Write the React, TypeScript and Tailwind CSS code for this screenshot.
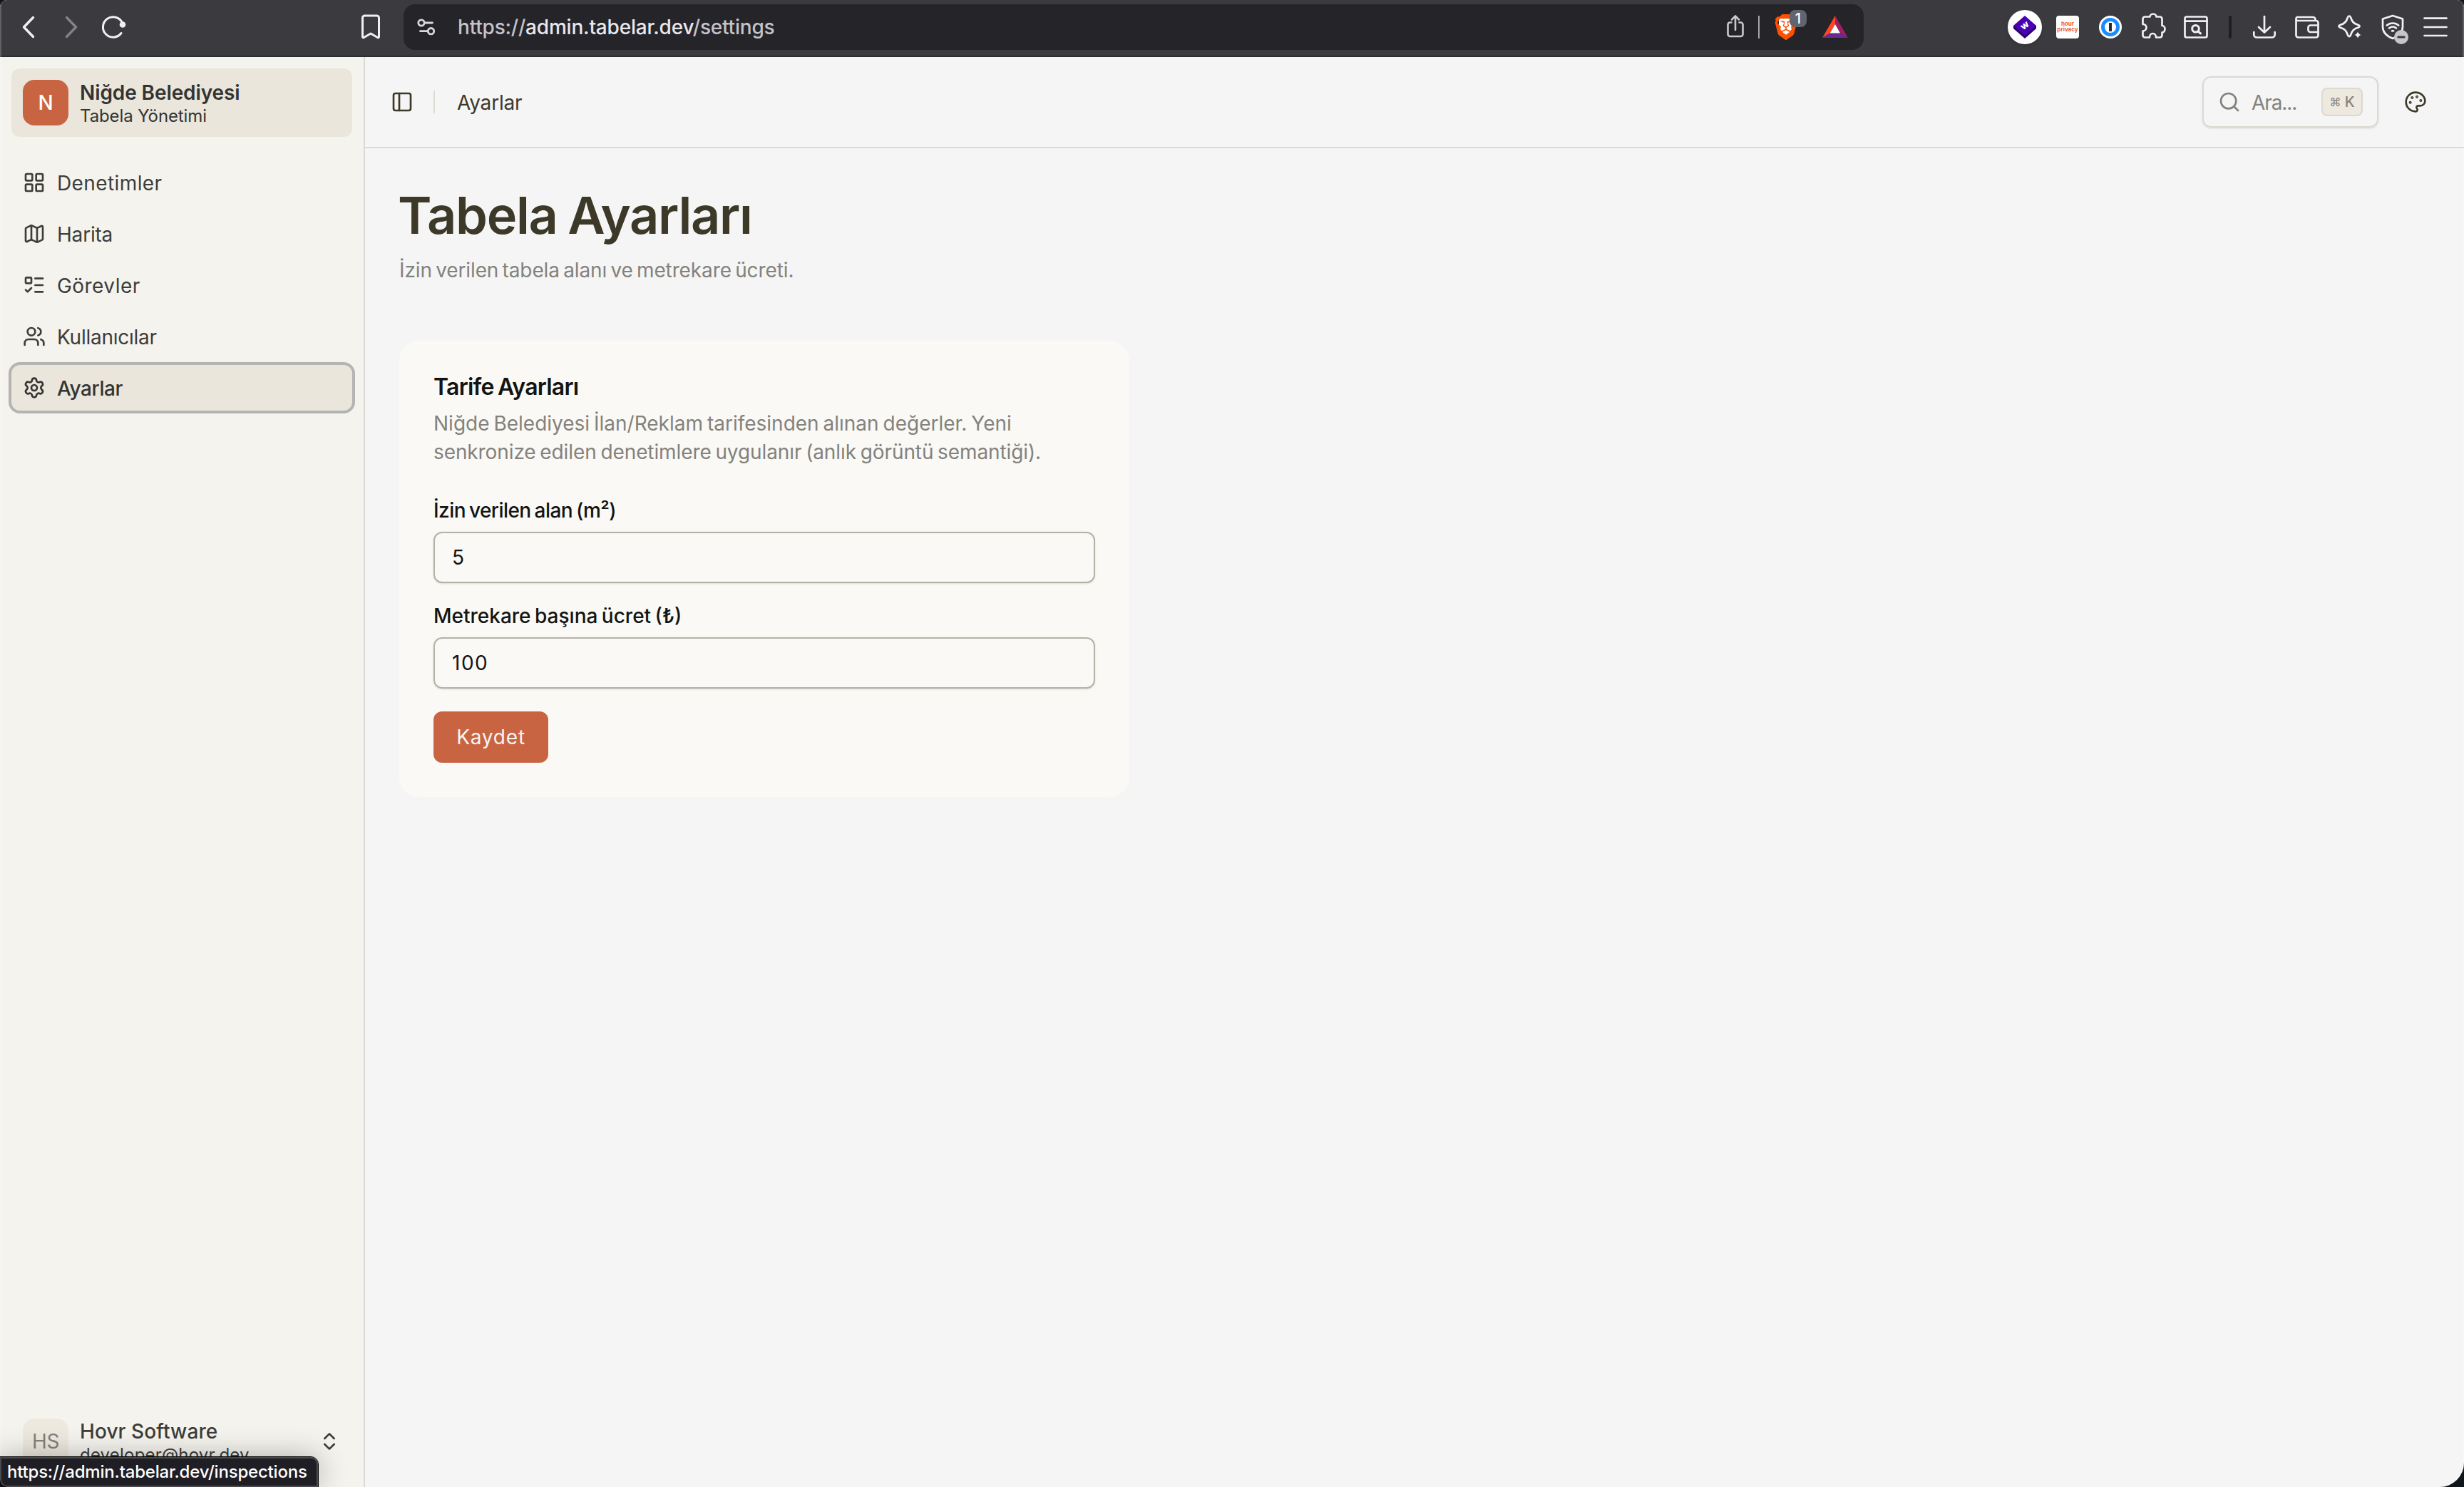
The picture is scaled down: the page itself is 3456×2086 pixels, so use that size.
import React from "react";
import { ChevronsUpDown, LayoutGrid, ListTodo, Map, Palette, PanelLeft, Search, Settings, Users } from "lucide-react";
import { SiBrave } from "react-icons/si";

const navItems = [
    { label: "Denetimler", icon: LayoutGrid, tracking: "tracking-[0.4px]" },
    { label: "Harita", icon: Map, tracking: "tracking-[-0.2px]" },
    { label: "Görevler", icon: ListTodo, tracking: "tracking-[0.45px]" },
    { label: "Kullanıcılar", icon: Users, tracking: "tracking-[-0.25px]" },
    { label: "Ayarlar", icon: Settings, tracking: "tracking-[-0.4px]", active: true },
];

// 48px drawing centred in a 60px toolbar slot
const ToolIcon = (props: { children: React.ReactNode, className?: string }) => (
    <div className="w-[60px] h-12 shrink-0 flex items-center justify-center">
        <svg width="48" height="48" viewBox="0 0 48 48" fill="none" stroke="currentColor" strokeWidth="2.7" strokeLinecap="round" strokeLinejoin="round" className={props.className ?? "text-[#f0f0f4]"}>
            {props.children}
        </svg>
    </div>
);

const AddressBar = () => (
    <div className="w-[2048px] h-16 ml-4 pl-2 pr-[22px] flex items-center rounded-2xl bg-[#252429]">
        <svg width="48" height="48" viewBox="0 0 48 48" fill="none" stroke="#d9d8dd" strokeWidth="2.8" strokeLinecap="round">
            <circle cx="17" cy="18" r="4.2" />
            <path d="M21.500 18H32.500M15.500 29.700H26" />
            <circle cx="30.500" cy="29.700" r="4.200" />
        </svg>
        <div className="ml-5 text-[28px] font-medium tracking-[-0.2px] text-[#c4c3c9] whitespace-nowrap">
            https://<span className="text-[#e8e7ec]">admin.tabelar.dev</span>/settings
        </div>
        <svg className="ml-auto" width="48" height="48" viewBox="0 0 48 48" fill="none" stroke="#c9c8cd" strokeWidth="2.6" strokeLinecap="round" strokeLinejoin="round">
            <path d="M18.500 17.500h-2a3 3 0 0 0-3 3V34a3 3 0 0 0 3 3h15a3 3 0 0 0 3-3V20.500a3 3 0 0 0-3-3h-2" />
            <path d="M24 28V9M19 13.500l5-5 5 5" />
        </svg>
        <div className="ml-2 w-[2px] h-8 bg-[#a5a4ab]" />
        <div className="relative ml-[19px] w-9 h-9 flex items-center justify-center">
            <div className="w-5 h-6 rounded-b-[10px] bg-white" />
            <SiBrave size={36} className="absolute inset-0 text-[#ff4f00]" />
            <div className="absolute left-[23px] -top-[6px] w-6 h-6 rounded-lg bg-[#626470] text-white text-[20px] leading-6 font-medium text-center">1</div>
        </div>
        <svg className="ml-[33px]" width="36" height="32" viewBox="0 0 36 32">
            <path d="M18 0 0 31l10.700-6.500L18 12z" fill="#ff4724" />
            <path d="m18 0 18 31-11-6.500L18 12z" fill="#9e1f63" />
            <path d="M0 31h36l-11-6.500H10.700z" fill="#662d91" />
            <path d="m18 12 7 12.500H10.700z" fill="#fff" />
        </svg>
    </div>
);

const Extensions = () => (
    <div className="ml-auto flex items-center">
        <div className="w-[60px] flex justify-center">
            <div className="w-12 h-12 rounded-full bg-white shadow-md">
                <svg width="48" height="48" viewBox="0 0 48 48">
                    <path d="M8 22v4l16 14 16-14v-4z" fill="#25006b" />
                    <path d="M24 8 8 22l16 14.500L40 22z" fill="#4a00b0" />
                    <text x="24" y="26" fontFamily="Inter" fontSize="13" fontWeight="800" fill="#fff" textAnchor="middle" transform="rotate(-38 24 22)">w</text>
                </svg>
            </div>
        </div>
        <div className="w-[60px] flex justify-center">
            <div className="w-8 h-8 rounded bg-white text-[#f0602a] text-[8px] leading-[8px] font-bold text-center pt-[7px]">
                hour<br />privacy
            </div>
        </div>
        <div className="w-[60px] flex justify-center">
            <div className="w-8 h-8 rounded-full bg-white flex items-center justify-center">
                <div className="w-[26px] h-[26px] rounded-full border-[5px] border-[#1a8cff] flex items-center justify-center">
                    <div className="w-1 h-3 bg-[#2b2b2e] shrink-0" />
                </div>
            </div>
        </div>
        <ToolIcon>
            <path d="M12.500 9.500h7a4.500 4 0 0 1 9 0h5a3 3 0 0 1 3 3V22a4 4.800 0 0 1 0 9.600v3.900a3 3 0 0 1-3 3h-5.500a4.500 5.500 0 0 0-9 0h-6.500a3 3 0 0 1-3-3v-6a5 4.800 0 0 0 0-9.600v-7.400a3 3 0 0 1 3-3z" />
        </ToolIcon>
        <ToolIcon>
            <rect x="8.5" y="9.5" width="31" height="29" rx="2.5" />
            <path d="M8.500 15.700h31" />
            <circle cx="23.500" cy="26.300" r="4.800" strokeWidth="3" />
            <path d="m27 30 3.500 3" strokeWidth="3" />
        </ToolIcon>
        <div className="w-9 flex justify-center">
            <div className="w-1 h-8 rounded-sm bg-[#1f1e23]" />
        </div>
        <ToolIcon>
            <path d="M24 9v22M16 24l8 7.500 8-7.500" />
            <path d="M9.300 31v3.500a4 4 0 0 0 4 4h21.400a4 4 0 0 0 4-4V31" />
        </ToolIcon>
        <ToolIcon>
            <path d="M8.500 13v22.500a3 3 0 0 0 3 3h25a3 3 0 0 0 3-3V18a3 3 0 0 0-3-3h-26a2 2.500 0 0 1 0-5H32a3.500 3.500 0 0 1 3.500 3.500V15" />
            <path d="M39.500 21.500h-11a3 3 0 0 0-3 3V28a3 3 0 0 0 3 3h11" />
        </ToolIcon>
        <ToolIcon>
            <path d="M23 8.500c1.500 0 2 1.500 2.500 3 1.500 5 3.500 7.500 9 9 1.500.5 3 .8 3 2.200s-1.500 1.800-3 2.300c-5.500 1.500-7.500 4-9 9-.5 1.500-1 3.200-2.500 3.200s-2-1.700-2.500-3.200c-1.500-5-3.500-7.500-9-9-1.500-.5-3-.9-3-2.300s1.500-1.700 3-2.200c5.500-1.500 7.500-4 9-9 .5-1.500 1-3 2.500-3z" />
            <path d="M35 28.500c1 4.500 2 5.500 6.500 6.500-4.500 1-5.500 2-6.500 6.500-1-4.500-2-5.500-6.500-6.500 4.500-1 5.500-2 6.500-6.500z" fill="currentColor" stroke="#3b3a3f" strokeWidth="1" />
        </ToolIcon>
        <ToolIcon>
            <path d="m24 8 14 4.500v11c0 8-5 13-14 16.500-9-3.500-14-8.500-14-16.500v-11z" />
            <path d="M15.800 21.500c4.500-4 11.900-4 16.400 0M19 25.500c3-2.500 7-2.500 10 0" />
            <ellipse cx="24" cy="29.300" rx="2.500" ry="1.500" fill="currentColor" stroke="none" />
            <circle cx="36" cy="38" r="10" fill="#c6c5ca" stroke="none" />
            <path d="M31.800 38h8.400" stroke="#3b3a3f" strokeWidth="3" />
        </ToolIcon>
        <ToolIcon>
            <path d="M8.500 11.700h31M8.500 24h31M8.500 36h31" />
        </ToolIcon>
    </div>
);

const BrowserBar = () => (
    <div className="h-20 shrink-0 flex items-center px-[10px] pb-[2px] bg-[#3b3a3f] border-b-2 border-[#2c2b30]">
        <ToolIcon>
            <path d="M30.500 10.500 17.500 24l13 13.500" strokeWidth="3.400" />
        </ToolIcon>
        <ToolIcon className="text-[#838287]">
            <path d="m17.500 10.500 13 13.500-13 13.500" strokeWidth="3.400" />
        </ToolIcon>
        <ToolIcon>
            <path d="M35.500 18A14.200 14.200 0 1 0 34 32.500" strokeWidth="3" />
            <circle cx="36" cy="20.500" r="4.300" fill="currentColor" stroke="none" />
        </ToolIcon>
        <div className="w-[300px]" />
        <ToolIcon>
            <path d="M12.500 11a3 3 0 0 1 3-3h17a3 3 0 0 1 3 3v26.500c0 1.200-1 1.800-2 1L24 33l-9.500 5.500c-1 .8-2 .2-2-1z" strokeWidth="3" />
        </ToolIcon>
        <AddressBar />
        <Extensions />
    </div>
);

const Sidebar = () => (
    <aside className="w-[512px] shrink-0 flex flex-col p-4 bg-[#f5f3ee] border-r-2 border-[#dad9d4] text-[#3d3d3a]">
        <div className="h-24 flex items-center gap-4 px-4 rounded-xl bg-[#eae6db]">
            <div className="w-16 h-16 rounded-2xl bg-[#c96442] text-white text-[28px] font-medium flex items-center justify-center">N</div>
            <div className="pt-1 text-[#343432]">
                <div className="text-[28px] leading-[34px] font-semibold tracking-[-0.1px]">Niğde Belediyesi</div>
                <div className="text-2xl leading-8 tracking-[-0.1px]">Tabela Yönetimi</div>
            </div>
        </div>
        <nav className="mt-8 flex flex-col gap-2">
            {navItems.map((item) => (
                <a key={item.label} className={item.active ? "h-16 px-4 flex items-center gap-4 rounded-xl bg-[#eae6db] text-[#343432] font-medium ring-4 ring-[#b4b4b3]" : "h-16 px-4 flex items-center gap-4 rounded-xl"}>
                    <item.icon size={32} />
                    <span className={`pt-px text-[28px] leading-10 ${item.tracking}`}>{item.label}</span>
                </a>
            ))}
        </nav>
        <div className="mt-auto h-24 px-4 flex items-center gap-4">
            <div className="w-16 h-16 rounded-2xl bg-[#ede9de] text-[#83827d] text-[28px] tracking-[-0.5px] flex items-center justify-center">HS</div>
            <div className="pt-[3px]">
                <div className="text-[28px] leading-[34px] font-medium tracking-[0.1px]">Hovr Software</div>
                <div className="text-2xl leading-8 tracking-[0.2px]">developer@hovr.dev</div>
            </div>
            <ChevronsUpDown size={32} className="ml-auto" />
        </div>
    </aside>
);

const Header = () => (
    <header className="h-32 shrink-0 pl-9 pr-[52px] flex items-center border-b-2 border-[#dadad3] text-[#3d3929]">
        <PanelLeft size={32} />
        <div className="ml-7 w-[2px] h-8 bg-[#dadad3]" />
        <span className="ml-[31px] pt-px text-[28px] tracking-[-0.2px]">Ayarlar</span>
        <div className="ml-auto w-[247px] h-[72px] pl-5 pr-5 flex items-center rounded-xl border-2 border-[#dadad3] shadow-sm text-[#83827d]">
            <Search size={32} />
            <span className="ml-[15px] pt-px text-[28px] tracking-[-1.1px]">Ara...</span>
            <kbd className="ml-auto w-[58px] h-10 flex items-center justify-center gap-[5px] rounded-lg border-2 border-[#dadad3] bg-[#ede9de] font-[Inter] text-[20px] font-medium">
                <span className="text-base font-normal">⌘</span>K
            </kbd>
        </div>
        <Palette size={32} className="ml-9" />
    </header>
);

const Field = (props: { label: string, value: string, tracking: string }) => (
    <label className="flex flex-col gap-4">
        <span className={`text-[28px] leading-none font-medium [word-spacing:-2px] ${props.tracking}`}>{props.label}</span>
        <input className="h-[72px] px-6 rounded-xl border-2 border-[#b4b2a7] shadow-sm text-[28px] tracking-[1.5px] outline-none" defaultValue={props.value} />
    </label>
);

const SettingsPage = () => (
    <main className="pl-12 pt-[54px]">
        <h1 className="-ml-[2px] text-[72px] leading-[80px] font-semibold tracking-[-1.3px] [word-spacing:-2px] text-[#3d3929]">Tabela Ayarları</h1>
        <p className="mt-[17px] text-[28px] leading-10 tracking-[-0.11px] [word-spacing:-2.5px] text-[#83827d]">İzin verilen tabela alanı ve metrekare ücreti.</p>
        <section className="mt-[79px] w-[1024px] h-[640px] p-12 rounded-[28px] bg-[#faf9f5] text-[#141413]">
            <h2 className="text-[32px] leading-8 pt-px -mb-px font-semibold tracking-[-0.75px] [word-spacing:-2px]">Tarife Ayarları</h2>
            <p className="mt-4 text-[28px] leading-10 [word-spacing:-2px] text-[#83827d] whitespace-nowrap">
                <span className="tracking-normal">Niğde Belediyesi İlan/Reklam tarifesinden alınan değerler. Yeni</span><br />
                <span className="tracking-[-0.1px]">senkronize edilen denetimlere uygulanır (anlık görüntü semantiği).</span>
            </p>
            <form className="mt-12 flex flex-col items-stretch gap-8">
                <Field label="İzin verilen alan (m²)" value="5" tracking="tracking-[-0.55px]" />
                <Field label="Metrekare başına ücret (₺)" value="100" tracking="tracking-normal" />
                <button type="button" className="self-start w-[161px] h-[72px] rounded-xl bg-[#c96442] text-[#f5f4f2] text-[28px] tracking-[0.8px]">Kaydet</button>
            </form>
        </section>
    </main>
);

const App = () => (
    <div className="relative w-[3456px] h-[2086px] overflow-hidden bg-[#10161c] font-[Inter,sans-serif]">
        <div className="relative h-full flex flex-col overflow-hidden rounded-t-[10px] rounded-b-[34px] bg-[#f5f5f5]">
            <BrowserBar />
            <div className="flex-1 flex min-h-0">
                <Sidebar />
                <div className="flex-1 flex flex-col">
                    <Header />
                    <SettingsPage />
                </div>
            </div>
            <div className="absolute inset-0 border-x-2 border-white/20 pointer-events-none" />
        </div>
        {/* link preview bubble of the browser */}
        <div className="absolute left-0 bottom-0 w-[446px] h-[42px] pl-2 flex items-center rounded-tr-[10px] rounded-bl-[10px] border-2 border-[#4a4a4e] outline outline-black bg-[#1f1e24] shadow-[0_0_40px_rgba(0,0,0,0.3)] text-white text-2xl font-medium tracking-[-0.2px] whitespace-nowrap">
            https://admin.tabelar.dev/inspections
        </div>
    </div>
);

export default App;
